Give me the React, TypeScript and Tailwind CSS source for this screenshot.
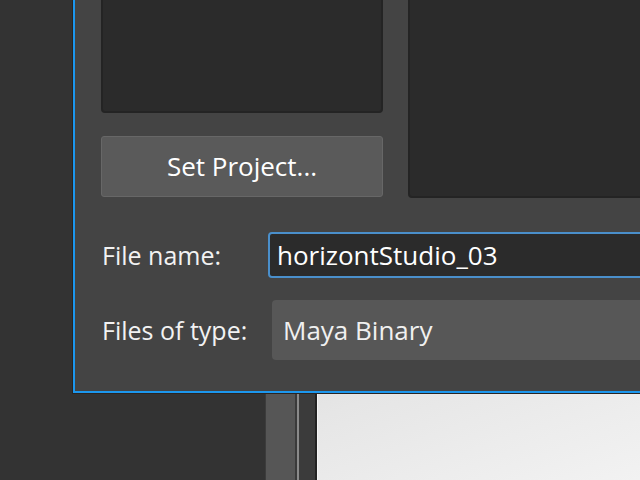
import React from "react";

const font = { fontFamily: '"Open Sans", "Noto Sans", sans-serif' };

function Well({ className }: { className: string }) {
  return <div className={`rounded-[4px] border-2 border-[#242424] bg-[#2b2b2b] ${className}`} />;
}

function Backdrop() {
  // the Maya main window behind the dialog: dark panel, a shelf strip, viewport
  return (
    <div className="flex h-full w-full">
      <div className="w-[265px] bg-[#333333]" />
      <div className="w-[30px] border-l border-[#3c3c3c] bg-[#565656]" />
      <div className="w-[2px] bg-[#3a3a3a]" />
      <div className="w-[2px] bg-[#8a8a8a]" />
      <div className="w-[16px] bg-[#3b3b3b]" />
      <div className="w-[2px] bg-[#222222]" />
      <div className="w-[1px] bg-[#f4f4f4]" />
      <div className="flex-1 bg-[linear-gradient(160deg,#bdbdbd_0%,#d2d2d2_35%,#e6e6e6_70%,#f2f2f2_100%)]" />
    </div>
  );
}

export default function App() {
  return (
    <div className="relative h-[480px] w-[640px] overflow-hidden bg-[#333333] text-white" style={font}>
      <Backdrop />

      {/* Save As dialog, running off the top and right edges */}
      <div className="absolute left-[73px] top-[-38px] right-[-40px] h-[431px] border-2 border-[#1c97ee] bg-[#444444] shadow-[0_0_0_1px_#2a2522]">
        <div className="flex h-full flex-col pl-[26px]">
          <div className="flex flex-1 gap-[25px]">
            <div className="flex w-[282px] flex-col">
              <Well className="mb-[23px] h-[149px]" />
              <button className="h-[61px] rounded-[3px] border border-[#676767] bg-[#5a5a5a] text-[26px] font-[500] text-white">
                Set Project...
              </button>
            </div>
            <Well className="h-[234px] flex-1" />
          </div>

          <div className="mt-[34px] flex items-center">
            <span className="w-[167px] pl-[1px] text-[25px] font-[500] leading-none text-[#f2f2f2]">File name:</span>
            <div className="flex h-[46px] flex-1 items-center rounded-[4px] border-2 border-[#4a8fcb] bg-[#2b2b2b] pl-[7px] text-[26px] font-[500] text-white">
              horizontStudio_03
            </div>
          </div>

          <div className="mt-[22px] mb-[31px] flex items-center">
            <span className="w-[171px] pl-[1px] text-[25px] font-[500] leading-none text-[#f2f2f2]">Files of type:</span>
            <div className="flex h-[60px] flex-1 items-center rounded-[4px] bg-[#575757] pl-[11px] text-[26px] font-[500] text-[#f0f0f0]">
              Maya Binary
            </div>
          </div>
        </div>
      </div>
    </div>
  );
}
